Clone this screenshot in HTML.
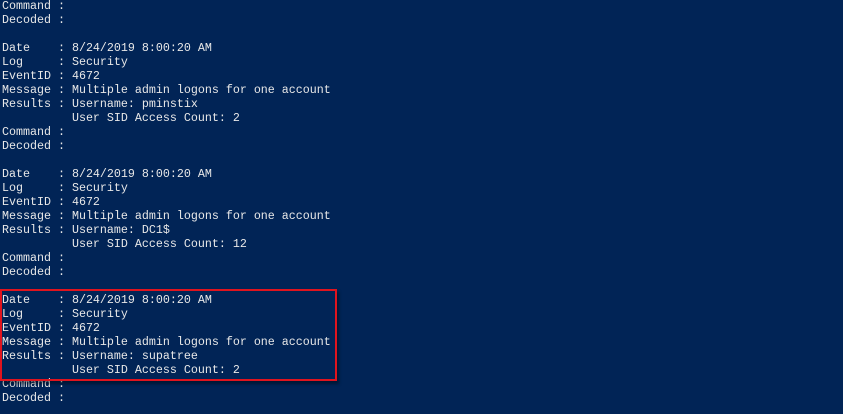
<!DOCTYPE html>
<html><head><style>
html,body{margin:0;padding:0;}
body{width:843px;height:414px;background:#012456;overflow:hidden;position:relative;}
pre{margin:0;position:absolute;left:2px;top:-1px;font-family:"Liberation Mono",monospace;font-size:11.67px;line-height:14px;color:#e8e8e8;}
.box{position:absolute;left:0;top:289px;width:333px;height:88px;border:2px solid #e0141e;box-shadow:2px 3px 3px rgba(0,0,0,0.4);}
</style></head><body>
<pre>Command :
Decoded :

Date    : 8/24/2019 8:00:20 AM
Log     : Security
EventID : 4672
Message : Multiple admin logons for one account
Results : Username: pminstix
          User SID Access Count: 2
Command :
Decoded :

Date    : 8/24/2019 8:00:20 AM
Log     : Security
EventID : 4672
Message : Multiple admin logons for one account
Results : Username: DC1$
          User SID Access Count: 12
Command :
Decoded :

Date    : 8/24/2019 8:00:20 AM
Log     : Security
EventID : 4672
Message : Multiple admin logons for one account
Results : Username: supatree
          User SID Access Count: 2
Command :
Decoded :</pre>
<div class="box"></div>
</body></html>
